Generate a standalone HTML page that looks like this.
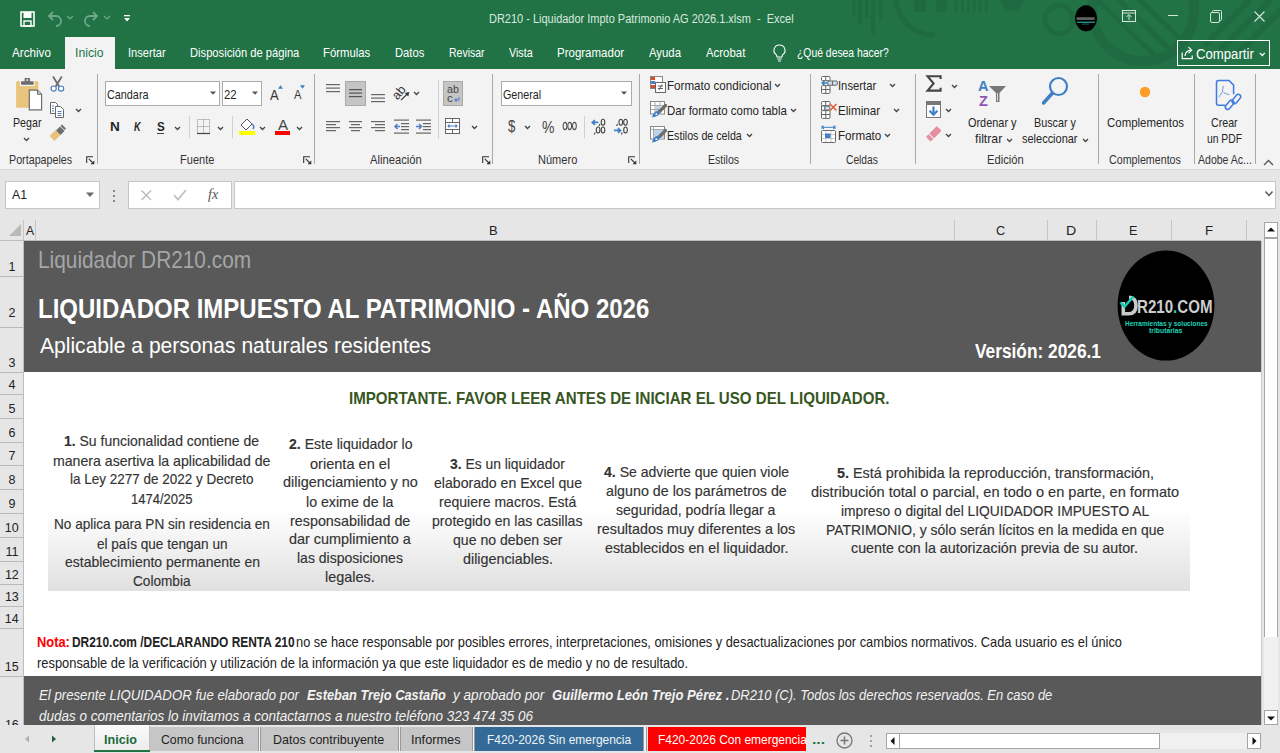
<!DOCTYPE html>
<html><head><meta charset="utf-8">
<style>
*{box-sizing:border-box;margin:0;padding:0}
html,body{width:1280px;height:753px;overflow:hidden;background:#fff;font-family:"Liberation Sans",sans-serif;position:relative}
.a{position:absolute}
.t{position:absolute;white-space:pre;transform-origin:0 0}
svg{overflow:visible}
</style></head><body>
<div class="a" style="left:0px;top:0px;width:1280px;height:69px;background:#217346"></div>
<svg class="a" style="left:830px;top:0px;" width="450" height="69" viewBox="0 0 450 69"><defs><clipPath id="cp1"><circle cx="313" cy="10" r="46"/></clipPath><clipPath id="cpt"><rect x="0" y="0" width="450" height="69"/></clipPath></defs>
<g fill="#1f6a40" clip-path="url(#cpt)">
<rect x="22" y="0" width="3.5" height="17"/><rect x="28" y="0" width="4" height="25"/><rect x="35" y="0" width="3.5" height="18"/><rect x="41" y="0" width="4" height="35"/><rect x="49" y="0" width="3.5" height="21"/>
<rect x="84" y="0" width="12" height="12"/><rect x="106" y="0" width="11" height="12"/>
<rect x="125" y="0" width="2.5" height="13"/><rect x="131" y="0" width="2.5" height="13"/><rect x="137" y="0" width="2.5" height="13"/><rect x="143" y="0" width="2.5" height="13"/><rect x="149" y="0" width="2.5" height="13"/><rect x="155" y="0" width="2.5" height="13"/>
<circle cx="182" cy="0" r="11"/>
</g>
<g fill="none" stroke="#1f6a40" clip-path="url(#cpt)">
<path d="M66 0 A38 38 0 0 0 105 35" stroke-width="5"/>
<circle cx="229" cy="19.5" r="14" stroke-width="5"/>
<circle cx="313" cy="10" r="51" stroke-width="10"/>
<g clip-path="url(#cp1)" stroke-width="5"><line x1="262" y1="-5" x2="335" y2="65"/><line x1="276" y1="-12" x2="349" y2="58"/><line x1="290" y1="-19" x2="363" y2="51"/></g>
<g stroke-width="6"><line x1="420" y1="0" x2="375" y2="45"/><line x1="440" y1="0" x2="390" y2="50"/><line x1="458" y1="3" x2="405" y2="56"/></g>
</g></svg>
<svg class="a" style="left:20px;top:11px;" width="15" height="16" viewBox="0 0 15 16"><rect x="1" y="1" width="13" height="14" fill="none" stroke="#fff" stroke-width="1.6"/><rect x="3.5" y="1" width="8" height="6" fill="#fff"/><rect x="4" y="10" width="7" height="5" fill="none" stroke="#fff" stroke-width="1.4"/></svg>
<svg class="a" style="left:47px;top:10px;" width="16" height="17" viewBox="0 0 16 17"><path d="M3 6 H9 A5 5 0 0 1 9 16" fill="none" stroke="#6ea98a" stroke-width="1.8"/><path d="M6 2 L2 6 L6 10" fill="none" stroke="#6ea98a" stroke-width="1.8"/></svg>
<svg class="a" style="left:66px;top:15px;" width="8" height="6" viewBox="0 0 8 6"><path d="M1 1 L4 4 L7 1" fill="none" stroke="#6ea98a" stroke-width="1.2"/></svg>
<svg class="a" style="left:83px;top:10px;" width="16" height="17" viewBox="0 0 16 17"><path d="M13 6 H7 A5 5 0 0 0 7 16" fill="none" stroke="#6ea98a" stroke-width="1.8"/><path d="M10 2 L14 6 L10 10" fill="none" stroke="#6ea98a" stroke-width="1.8"/></svg>
<svg class="a" style="left:103px;top:15px;" width="8" height="6" viewBox="0 0 8 6"><path d="M1 1 L4 4 L7 1" fill="none" stroke="#6ea98a" stroke-width="1.2"/></svg>
<svg class="a" style="left:123px;top:14px;" width="8" height="8" viewBox="0 0 8 8"><rect x="1" y="1" width="6" height="1.3" fill="#fff"/><path d="M1 4 L7 4 L4 7.5Z" fill="#fff"/></svg>
<div class="t" style="left:488.62px;top:13.12px;font-size:12.5px;line-height:12.5px;color:#dae9df;transform:scaleX(0.8786);">DR210 - Liquidador Impto Patrimonio AG 2026.1.xlsm  -  Excel</div>
<svg class="a" style="left:1074px;top:5px;" width="24" height="27" viewBox="0 0 24 27"><ellipse cx="12" cy="13.3" rx="10.9" ry="13.1" fill="#000"/><rect x="2.5" y="12.2" width="18" height="2.8" fill="#bdbdbd" opacity="0.5"/><rect x="3" y="16.6" width="18" height="1.3" fill="#2bb7a5" opacity="0.85"/><rect x="8" y="18.6" width="7" height="0.9" fill="#2bb7a5" opacity="0.6"/></svg>
<svg class="a" style="left:1122px;top:10px;" width="15" height="13" viewBox="0 0 15 13"><rect x="0.5" y="0.5" width="13" height="11" fill="none" stroke="#d5e6db" stroke-width="1"/><line x1="0.5" y1="3" x2="13.5" y2="3" stroke="#d5e6db"/><path d="M7 10 V5 M4.5 7 L7 4.5 L9.5 7" fill="none" stroke="#d5e6db"/></svg>
<div class="a" style="left:1168px;top:15px;width:10px;height:1px;background:#d5e6db"></div>
<svg class="a" style="left:1210px;top:10px;" width="12" height="13" viewBox="0 0 12 13"><rect x="0.5" y="2.5" width="9" height="10" fill="none" stroke="#d5e6db" rx="1.5"/><path d="M2.5 2.5 V1.5 Q2.5 0.5 3.5 0.5 H10.5 Q11.5 0.5 11.5 1.5 V9.5 Q11.5 10.5 10.5 10.5 H9.5" fill="none" stroke="#d5e6db"/></svg>
<svg class="a" style="left:1254px;top:11px;" width="11" height="11" viewBox="0 0 11 11"><path d="M0.5 0.5 L10.5 10.5 M10.5 0.5 L0.5 10.5" stroke="#d5e6db" stroke-width="1.1"/></svg>
<div class="a" style="left:65px;top:37px;width:50px;height:32px;background:#f3f3f3"></div>
<div class="t" style="left:12.00px;top:46.45px;font-size:13px;line-height:13px;color:#ffffff;transform:scaleX(0.8974);">Archivo</div>
<div class="t" style="left:127.50px;top:46.45px;font-size:13px;line-height:13px;color:#ffffff;transform:scaleX(0.8534);">Insertar</div>
<div class="t" style="left:189.61px;top:46.45px;font-size:13px;line-height:13px;color:#ffffff;transform:scaleX(0.8595);">Disposición de página</div>
<div class="t" style="left:323.49px;top:46.45px;font-size:13px;line-height:13px;color:#ffffff;transform:scaleX(0.8715);">Fórmulas</div>
<div class="t" style="left:395.00px;top:46.45px;font-size:13px;line-height:13px;color:#ffffff;transform:scaleX(0.8646);">Datos</div>
<div class="t" style="left:448.56px;top:46.45px;font-size:13px;line-height:13px;color:#ffffff;transform:scaleX(0.8065);">Revisar</div>
<div class="t" style="left:509.00px;top:46.45px;font-size:13px;line-height:13px;color:#ffffff;transform:scaleX(0.8249);">Vista</div>
<div class="t" style="left:557.08px;top:46.45px;font-size:13px;line-height:13px;color:#ffffff;transform:scaleX(0.8845);">Programador</div>
<div class="t" style="left:648.75px;top:46.45px;font-size:13px;line-height:13px;color:#ffffff;transform:scaleX(0.8729);">Ayuda</div>
<div class="t" style="left:706.25px;top:46.45px;font-size:13px;line-height:13px;color:#ffffff;transform:scaleX(0.8777);">Acrobat</div>
<div class="t" style="left:797.38px;top:46.45px;font-size:13px;line-height:13px;color:#ffffff;transform:scaleX(0.7987);">¿Qué desea hacer?</div>
<div class="t" style="left:74.90px;top:46.45px;font-size:13px;line-height:13px;color:#217346;transform:scaleX(0.9398);">Inicio</div>
<svg class="a" style="left:773px;top:44px;" width="13" height="18" viewBox="0 0 13 18"><path d="M6.5 1 A5.3 5.3 0 0 0 3.2 10.6 Q4 11.5 4 13 H9 Q9 11.5 9.8 10.6 A5.3 5.3 0 0 0 6.5 1Z" fill="none" stroke="#fff" stroke-width="1.1"/><path d="M4.3 15 H8.7 M5 17 H8" stroke="#fff" stroke-width="1.1"/></svg>
<div class="a" style="left:1177px;top:40px;width:93px;height:26px;border:1.5px solid #fff"></div>
<svg class="a" style="left:1181px;top:46px;" width="13" height="14" viewBox="0 0 13 14"><path d="M1.2 6.5 V12.6 H11.2 V9.5" fill="none" stroke="#fff" stroke-width="1.2"/><path d="M4 10 Q4.5 5 9.5 4.2" fill="none" stroke="#fff" stroke-width="1.2"/><path d="M7.6 1.2 L10.6 4.2 L7.6 7.2" fill="none" stroke="#fff" stroke-width="1.2"/></svg>
<div class="t" style="left:1196.14px;top:46.60px;font-size:14px;line-height:14px;color:#ffffff;transform:scaleX(0.9403);">Compartir</div>
<svg class="a" style="left:1259px;top:52px;" width="7" height="5" viewBox="0 0 7 5"><path d="M0.8 0.8 L3.3 3.5 L5.8 0.8" fill="none" stroke="#fff" stroke-width="1.2"/></svg>
<div class="a" style="left:0px;top:69px;width:1280px;height:100px;background:#f3f3f3"></div>
<div class="a" style="left:0px;top:169px;width:1280px;height:1px;background:#d4d4d4"></div>
<div class="a" style="left:97px;top:74px;width:1px;height:90px;background:#a9a9a9"></div>
<div class="a" style="left:314px;top:74px;width:1px;height:90px;background:#a9a9a9"></div>
<div class="a" style="left:492px;top:74px;width:1px;height:90px;background:#a9a9a9"></div>
<div class="a" style="left:639px;top:74px;width:1px;height:90px;background:#a9a9a9"></div>
<div class="a" style="left:810px;top:74px;width:1px;height:90px;background:#a9a9a9"></div>
<div class="a" style="left:915px;top:74px;width:1px;height:90px;background:#a9a9a9"></div>
<div class="a" style="left:1098px;top:74px;width:1px;height:90px;background:#a9a9a9"></div>
<div class="a" style="left:1194px;top:74px;width:1px;height:90px;background:#a9a9a9"></div>
<div class="a" style="left:1255px;top:74px;width:1px;height:90px;background:#a9a9a9"></div>
<div class="t" style="left:9.14px;top:153.82px;font-size:12.8px;line-height:12.8px;color:#333333;transform:scaleX(0.8380);">Portapapeles</div>
<div class="t" style="left:180.12px;top:153.82px;font-size:12.8px;line-height:12.8px;color:#333333;transform:scaleX(0.8622);">Fuente</div>
<div class="t" style="left:370.00px;top:153.82px;font-size:12.8px;line-height:12.8px;color:#333333;transform:scaleX(0.8757);">Alineación</div>
<div class="t" style="left:538.12px;top:153.82px;font-size:12.8px;line-height:12.8px;color:#333333;transform:scaleX(0.8630);">Número</div>
<div class="t" style="left:708.15px;top:153.82px;font-size:12.8px;line-height:12.8px;color:#333333;transform:scaleX(0.8253);">Estilos</div>
<div class="t" style="left:846.49px;top:153.82px;font-size:12.8px;line-height:12.8px;color:#333333;transform:scaleX(0.7993);">Celdas</div>
<div class="t" style="left:987.11px;top:153.82px;font-size:12.8px;line-height:12.8px;color:#333333;transform:scaleX(0.8736);">Edición</div>
<div class="t" style="left:1109.47px;top:153.82px;font-size:12.8px;line-height:12.8px;color:#333333;transform:scaleX(0.8354);">Complementos</div>
<div class="t" style="left:1198.00px;top:153.82px;font-size:12.8px;line-height:12.8px;color:#333333;transform:scaleX(0.8232);">Adobe Ac...</div>
<svg class="a" style="left:86px;top:156px;" width="9" height="9" viewBox="0 0 9 9"><path d="M0.7 7 V0.7 H7" fill="none" stroke="#333" stroke-width="1.1"/><path d="M2.8 2.8 L7.5 7.5" stroke="#333" stroke-width="1.1"/><path d="M8.3 4.5 V8.3 H4.5Z" fill="#333"/></svg>
<svg class="a" style="left:303px;top:156px;" width="9" height="9" viewBox="0 0 9 9"><path d="M0.7 7 V0.7 H7" fill="none" stroke="#333" stroke-width="1.1"/><path d="M2.8 2.8 L7.5 7.5" stroke="#333" stroke-width="1.1"/><path d="M8.3 4.5 V8.3 H4.5Z" fill="#333"/></svg>
<svg class="a" style="left:482px;top:156px;" width="9" height="9" viewBox="0 0 9 9"><path d="M0.7 7 V0.7 H7" fill="none" stroke="#333" stroke-width="1.1"/><path d="M2.8 2.8 L7.5 7.5" stroke="#333" stroke-width="1.1"/><path d="M8.3 4.5 V8.3 H4.5Z" fill="#333"/></svg>
<svg class="a" style="left:628px;top:156px;" width="9" height="9" viewBox="0 0 9 9"><path d="M0.7 7 V0.7 H7" fill="none" stroke="#333" stroke-width="1.1"/><path d="M2.8 2.8 L7.5 7.5" stroke="#333" stroke-width="1.1"/><path d="M8.3 4.5 V8.3 H4.5Z" fill="#333"/></svg>
<svg class="a" style="left:15px;top:77px;" width="30" height="34" viewBox="0 0 30 34"><rect x="1.1" y="4" width="22.3" height="26.8" rx="1.6" fill="#e9c47c"/><rect x="4.8" y="3" width="15" height="6" fill="#f3f3f3"/><rect x="6" y="4.3" width="12.7" height="3.5" rx="0.8" fill="#6d6d6d"/><rect x="9.6" y="1" width="5.4" height="4" rx="0.8" fill="#6d6d6d"/><rect x="11.4" y="2.3" width="1.8" height="1.5" fill="#f3f3f3"/><path d="M14.3 13.2 H22.5 L26.6 17.3 V32.8 H14.3Z" fill="#fff" stroke="#6d6d6d" stroke-width="1.2"/><path d="M22.5 13.2 V17.3 H26.6" fill="#c8c8c8" stroke="#6d6d6d" stroke-width="1"/></svg>
<div class="t" style="left:12.65px;top:115.73px;font-size:13.5px;line-height:13.5px;color:#262626;transform:scaleX(0.7895);">Pegar</div>
<svg class="a" style="left:23px;top:137px;" width="7" height="5" viewBox="0 0 7 5"><path d="M1 1 L3.5 3.5 L6 1" fill="none" stroke="#444" stroke-width="1.3"/></svg>
<svg class="a" style="left:50px;top:76px;" width="15" height="17" viewBox="0 0 15 17"><path d="M3 0.5 L9.3 10.8 M11.8 0.5 L5.5 10.8" stroke="#6d6d6d" stroke-width="1.8"/><circle cx="3.6" cy="12.6" r="2.6" fill="#fff" stroke="#4f7ec6" stroke-width="1.2"/><circle cx="11.1" cy="12.6" r="2.6" fill="#fff" stroke="#4f7ec6" stroke-width="1.2"/></svg>
<svg class="a" style="left:49px;top:101px;" width="16" height="17" viewBox="0 0 16 17"><path d="M1.5 1.5 H6.5 L8.5 3.5 V12.5 H1.5Z" fill="#fff" stroke="#666"/><path d="M6.5 5.5 H11.5 L14.5 8.5 V16.5 H6.5Z" fill="#fff" stroke="#666"/><path d="M3 5 H5 M3 7.5 H5 M3 10 H5" stroke="#4f7ec6"/><path d="M8.5 10.5 H12.5 M8.5 12.5 H12.5 M8.5 14.5 H12.5" stroke="#4f7ec6"/></svg>
<svg class="a" style="left:75px;top:108px;" width="7" height="5" viewBox="0 0 7 5"><path d="M1 1 L3.5 3.5 L6 1" fill="none" stroke="#444" stroke-width="1.3"/></svg>
<svg class="a" style="left:49px;top:125px;" width="17" height="17" viewBox="0 0 17 17"><path d="M0.5 11 L6.5 5 L11.5 10 L5.5 16Z" fill="#e8c27a"/><path d="M7 5.5 L11 1.5 L15.5 6 L11.5 10Z" fill="#6d6d6d"/><path d="M11.5 1 L13 -0.5 L17 3.5 L15.5 5Z" fill="#6d6d6d"/></svg>
<div class="a" style="left:105px;top:81px;width:115px;height:25px;background:#fff;border:1px solid #ababab"></div>
<div class="t" style="left:107.46px;top:87.73px;font-size:13.5px;line-height:13.5px;color:#262626;transform:scaleX(0.8013);">Candara</div>
<svg class="a" style="left:210px;top:91px;" width="7" height="5" viewBox="0 0 7 5"><path d="M0 0.5 H6 L3 3.8Z" fill="#555"/></svg>
<div class="a" style="left:222px;top:81px;width:40px;height:25px;background:#fff;border:1px solid #ababab"></div>
<div class="t" style="left:224.43px;top:87.73px;font-size:13.5px;line-height:13.5px;color:#262626;transform:scaleX(0.8424);">22</div>
<svg class="a" style="left:252px;top:91px;" width="7" height="5" viewBox="0 0 7 5"><path d="M0 0.5 H6 L3 3.8Z" fill="#555"/></svg>
<div class="t" style="left:270.40px;top:86.70px;font-size:15.3px;line-height:15.3px;color:#333;transform:scaleX(0.8517);">A</div>
<svg class="a" style="left:277.5px;top:85px;" width="6" height="4" viewBox="0 0 6 4"><path d="M0 3.8 L2.5 0.3 L5 3.8Z" fill="#3f7fc3"/></svg>
<div class="t" style="left:293.50px;top:89.08px;font-size:12.5px;line-height:12.5px;color:#333;transform:scaleX(0.8848);">A</div>
<svg class="a" style="left:300px;top:85px;" width="6" height="4" viewBox="0 0 6 4"><path d="M0 0.3 L2.5 3.8 L5 0.3Z" fill="#3f7fc3"/></svg>
<div class="t" style="left:110.05px;top:120.80px;font-size:12px;line-height:12px;color:#262626;transform:scaleX(1.1299);"><span style="font-weight:bold;">N</span></div>
<div class="t" style="left:133.82px;top:120.80px;font-size:12px;line-height:12px;color:#262626;transform:scaleX(0.7675);"><span style="font-weight:bold;font-style:italic;">K</span></div>
<div class="t" style="left:156.65px;top:120.80px;font-size:12px;line-height:12px;color:#262626;transform:scaleX(0.9722);"><span style="font-weight:bold;">S</span></div>
<div class="a" style="left:157px;top:133px;width:7px;height:1px;background:#444"></div>
<svg class="a" style="left:174px;top:126px;" width="7" height="5" viewBox="0 0 7 5"><path d="M1 1 L3.5 3.5 L6 1" fill="none" stroke="#444" stroke-width="1.3"/></svg>
<div class="a" style="left:189px;top:116px;width:1px;height:22px;background:#d0d0d0"></div>
<svg class="a" style="left:197px;top:119px;" width="13" height="15" viewBox="0 0 13 15"><path d="M0.5 0.5 H12.5 V14.5 H0.5Z M6.5 0.5 V14.5 M0.5 7.5 H12.5" fill="none" stroke="#888" stroke-dasharray="1 1"/><path d="M0 14.5 H13" stroke="#444" stroke-width="1.2"/></svg>
<svg class="a" style="left:217px;top:126px;" width="7" height="5" viewBox="0 0 7 5"><path d="M1 1 L3.5 3.5 L6 1" fill="none" stroke="#444" stroke-width="1.3"/></svg>
<div class="a" style="left:232px;top:116px;width:1px;height:22px;background:#d0d0d0"></div>
<svg class="a" style="left:239px;top:117px;" width="17" height="19" viewBox="0 0 17 19"><path d="M2 8 L8 2 L13 7 L7 13Z" fill="#fff" stroke="#555"/><path d="M13 7 Q16 9 14 12" fill="none" stroke="#4f7ec6" stroke-width="1.5"/><rect x="0" y="14" width="16" height="4" fill="#ffff00"/></svg>
<svg class="a" style="left:259px;top:126px;" width="7" height="5" viewBox="0 0 7 5"><path d="M1 1 L3.5 3.5 L6 1" fill="none" stroke="#444" stroke-width="1.3"/></svg>
<div class="t" style="left:278.00px;top:117.67px;font-size:14.5px;line-height:14.5px;color:#444;transform:scaleX(1.0449);">A</div>
<div class="a" style="left:275px;top:131px;width:15px;height:4px;background:#ff0000"></div>
<svg class="a" style="left:296px;top:126px;" width="7" height="5" viewBox="0 0 7 5"><path d="M1 1 L3.5 3.5 L6 1" fill="none" stroke="#444" stroke-width="1.3"/></svg>
<svg class="a" style="left:326px;top:84px;" width="20" height="14" viewBox="0 0 20 14"><rect x="0" y="0.0" width="14" height="1.2" fill="#666"/><rect x="0" y="3.5" width="14" height="1.2" fill="#666"/><rect x="0" y="7.0" width="14" height="1.2" fill="#666"/></svg>
<div class="a" style="left:345px;top:81px;width:21px;height:25px;background:#c5c5c5;border:1px solid #a9a9a9"></div>
<svg class="a" style="left:349px;top:89px;" width="20" height="14" viewBox="0 0 20 14"><rect x="0" y="0.0" width="13" height="1.2" fill="#555"/><rect x="0" y="3.5" width="13" height="1.2" fill="#555"/><rect x="0" y="7.0" width="13" height="1.2" fill="#555"/></svg>
<svg class="a" style="left:371px;top:94px;" width="20" height="14" viewBox="0 0 20 14"><rect x="0" y="0.0" width="14" height="1.2" fill="#666"/><rect x="0" y="3.5" width="14" height="1.2" fill="#666"/><rect x="0" y="7.0" width="14" height="1.2" fill="#666"/></svg>
<svg class="a" style="left:391px;top:83px;" width="20" height="20" viewBox="0 0 20 20"><text x="1" y="14.5" font-size="12.5" font-family="Liberation Sans" fill="#333" transform="rotate(-50 7 10)">ab</text><path d="M10 17.2 L17.2 10" stroke="#333" stroke-width="1.2"/><path d="M18.3 8.9 L13.8 9.9 L17.3 13.4Z" fill="#333"/></svg>
<svg class="a" style="left:412.5px;top:91px;" width="7" height="5" viewBox="0 0 7 5"><path d="M1 1 L3.5 3.5 L6 1" fill="none" stroke="#444" stroke-width="1.3"/></svg>
<div class="a" style="left:438px;top:80px;width:1px;height:59px;background:#d0d0d0"></div>
<div class="a" style="left:443px;top:81px;width:20px;height:25px;background:#c5c5c5;border:1px solid #a9a9a9"></div>
<div class="t" style="left:446.58px;top:84.50px;font-size:10px;line-height:10px;color:#444;transform:scaleX(1.0577);">ab</div>
<div class="t" style="left:446.53px;top:93.50px;font-size:10px;line-height:10px;color:#444;transform:scaleX(1.1628);">c</div>
<svg class="a" style="left:454px;top:97px;" width="6" height="5" viewBox="0 0 6 5"><path d="M5 0 V3 H1 M2.5 1.5 L1 3 L2.5 4.5" fill="none" stroke="#4f7ec6" stroke-width="1.1"/></svg>
<svg class="a" style="left:326px;top:121px;" width="20" height="14" viewBox="0 0 20 14"><rect x="0" y="0.0" width="14" height="1.2" fill="#666"/><rect x="0" y="3.0" width="10" height="1.2" fill="#666"/><rect x="0" y="6.0" width="14" height="1.2" fill="#666"/><rect x="0" y="9.0" width="10" height="1.2" fill="#666"/></svg>
<svg class="a" style="left:349px;top:121px;" width="20" height="14" viewBox="0 0 20 14"><rect x="0" y="0.0" width="13" height="1.2" fill="#666"/><rect x="2" y="3.0" width="9" height="1.2" fill="#666"/><rect x="0" y="6.0" width="13" height="1.2" fill="#666"/><rect x="2" y="9.0" width="9" height="1.2" fill="#666"/></svg>
<svg class="a" style="left:371px;top:121px;" width="20" height="14" viewBox="0 0 20 14"><rect x="0" y="0.0" width="14" height="1.2" fill="#666"/><rect x="4" y="3.0" width="10" height="1.2" fill="#666"/><rect x="0" y="6.0" width="14" height="1.2" fill="#666"/><rect x="4" y="9.0" width="10" height="1.2" fill="#666"/></svg>
<svg class="a" style="left:394px;top:119px;" width="16" height="15" viewBox="0 0 16 15"><rect x="0" y="0.5" width="15" height="1.2" fill="#666"/><rect x="7" y="4" width="8" height="1.2" fill="#666"/><rect x="7" y="7" width="8" height="1.2" fill="#666"/><rect x="7" y="10" width="8" height="1.2" fill="#666"/><rect x="0" y="13.5" width="15" height="1.2" fill="#666"/><path d="M6 7.5 H1 M3.5 5 L1 7.5 L3.5 10" fill="none" stroke="#4f7ec6" stroke-width="1.5"/></svg>
<svg class="a" style="left:416px;top:119px;" width="16" height="15" viewBox="0 0 16 15"><rect x="0" y="0.5" width="15" height="1.2" fill="#666"/><rect x="7" y="4" width="8" height="1.2" fill="#666"/><rect x="7" y="7" width="8" height="1.2" fill="#666"/><rect x="7" y="10" width="8" height="1.2" fill="#666"/><rect x="0" y="13.5" width="15" height="1.2" fill="#666"/><path d="M0 7.5 H5.5 M3 5 L5.5 7.5 L3 10" fill="none" stroke="#4f7ec6" stroke-width="1.5"/></svg>
<svg class="a" style="left:445px;top:118px;" width="16" height="17" viewBox="0 0 16 17"><rect x="0.5" y="0.5" width="14" height="15" fill="#fff" stroke="#666"/><path d="M0.5 4.5 H14.5 M0.5 11.5 H14.5 M7.5 0.5 V4.5 M7.5 11.5 V15.5" stroke="#666"/><path d="M3 8 H12 M4.5 6.5 L3 8 L4.5 9.5 M10.5 6.5 L12 8 L10.5 9.5" fill="none" stroke="#4f7ec6" stroke-width="1.1"/></svg>
<svg class="a" style="left:471px;top:125px;" width="7" height="5" viewBox="0 0 7 5"><path d="M1 1 L3.5 3.5 L6 1" fill="none" stroke="#444" stroke-width="1.3"/></svg>
<div class="a" style="left:501px;top:81px;width:131px;height:25px;background:#fff;border:1px solid #ababab"></div>
<div class="t" style="left:503.46px;top:87.83px;font-size:13.5px;line-height:13.5px;color:#262626;transform:scaleX(0.7944);">General</div>
<svg class="a" style="left:621px;top:91px;" width="7" height="5" viewBox="0 0 7 5"><path d="M0 0.5 H6 L3 3.8Z" fill="#555"/></svg>
<div class="t" style="left:507.87px;top:118.28px;font-size:16.5px;line-height:16.5px;color:#444;transform:scaleX(0.8005);">$</div>
<svg class="a" style="left:524px;top:125px;" width="7" height="5" viewBox="0 0 7 5"><path d="M1 1 L3.5 3.5 L6 1" fill="none" stroke="#444" stroke-width="1.3"/></svg>
<div class="t" style="left:542.08px;top:118.97px;font-size:16.5px;line-height:16.5px;color:#444;transform:scaleX(0.8500);">%</div>
<svg class="a" style="left:562px;top:121px;" width="16" height="10" viewBox="0 0 16 10"><ellipse cx="3" cy="5" rx="1.9" ry="3.6" fill="none" stroke="#555" stroke-width="1.1"/><ellipse cx="7.7" cy="5" rx="1.9" ry="3.6" fill="none" stroke="#555" stroke-width="1.1"/><ellipse cx="12.4" cy="5" rx="1.9" ry="3.6" fill="none" stroke="#555" stroke-width="1.1"/></svg>
<div class="a" style="left:584px;top:116px;width:1px;height:22px;background:#d0d0d0"></div>
<svg class="a" style="left:590px;top:118px;" width="16" height="18" viewBox="0 0 16 18"><ellipse cx="13" cy="4.2" rx="1.8" ry="3" fill="none" stroke="#444" stroke-width="1.1"/><ellipse cx="8.1" cy="12" rx="1.8" ry="3" fill="none" stroke="#444" stroke-width="1.1"/><ellipse cx="13" cy="12" rx="1.8" ry="3" fill="none" stroke="#444" stroke-width="1.1"/><path d="M10 6 L9 8 M5.2 14.4 L4.2 16.4" stroke="#444" stroke-width="1.1"/><path d="M8.3 4.4 H2.5 M4.9 2 L2.2 4.4 L4.9 6.8" fill="none" stroke="#3f7fc3" stroke-width="1.6"/></svg>
<svg class="a" style="left:612px;top:118px;" width="16" height="18" viewBox="0 0 16 18"><ellipse cx="8.8" cy="4.2" rx="1.8" ry="3" fill="none" stroke="#444" stroke-width="1.1"/><ellipse cx="13.5" cy="4.2" rx="1.8" ry="3" fill="none" stroke="#444" stroke-width="1.1"/><ellipse cx="13.5" cy="12" rx="1.8" ry="3" fill="none" stroke="#444" stroke-width="1.1"/><path d="M5.6 6 L4.6 8 M10.3 14.4 L9.3 16.4" stroke="#444" stroke-width="1.1"/><path d="M2 12.4 H8.3 M5.9 10 L8.6 12.4 L5.9 14.8" fill="none" stroke="#3f7fc3" stroke-width="1.6"/></svg>
<svg class="a" style="left:650px;top:76px;" width="16" height="17" viewBox="0 0 16 17"><rect x="0.5" y="0.5" width="12" height="12" fill="#fff" stroke="#888"/><rect x="1" y="1" width="4" height="3" fill="#e04a2a"/><rect x="1" y="5" width="4" height="3" fill="#4f7ec6"/><rect x="1" y="9" width="4" height="3" fill="#e04a2a"/><rect x="5.5" y="6.5" width="10" height="10" fill="#fff" stroke="#666"/><path d="M8 10 H13 M8 12.5 H13 M12 8.5 L9 14" stroke="#555" stroke-width="0.9"/></svg>
<div class="t" style="left:667.07px;top:78.73px;font-size:13.5px;line-height:13.5px;color:#262626;transform:scaleX(0.8611);">Formato condicional</div>
<svg class="a" style="left:774px;top:83px;" width="7" height="5" viewBox="0 0 7 5"><path d="M1 1 L3.5 3.5 L6 1" fill="none" stroke="#444" stroke-width="1.3"/></svg>
<svg class="a" style="left:650px;top:101px;" width="17" height="17" viewBox="0 0 17 17"><rect x="0.5" y="0.5" width="14" height="12.5" fill="#fff" stroke="#888"/><path d="M0.5 4.5 H14.5 M0.5 8.5 H14.5 M5 0.5 V13 M10 0.5 V13" stroke="#aaa"/><rect x="5.5" y="5" width="4" height="3" fill="#bcd3ee"/><rect x="5.5" y="9" width="4" height="3.5" fill="#bcd3ee"/><path d="M15.5 4.5 L9.5 10.5" stroke="#6d6d6d" stroke-width="3.2" stroke-linecap="round"/><path d="M2 16.5 Q2.5 12.5 5.5 10.5 Q7.5 9.5 9 11 Q10 12.8 8.3 14.3 Q5.5 16.3 2 16.5Z" fill="#3f7fc3"/><circle cx="6.3" cy="13.2" r="0.9" fill="#fff"/></svg>
<div class="t" style="left:667.08px;top:103.62px;font-size:13.5px;line-height:13.5px;color:#262626;transform:scaleX(0.8500);">Dar formato como tabla</div>
<svg class="a" style="left:790px;top:108px;" width="7" height="5" viewBox="0 0 7 5"><path d="M1 1 L3.5 3.5 L6 1" fill="none" stroke="#444" stroke-width="1.3"/></svg>
<svg class="a" style="left:650px;top:126px;" width="17" height="17" viewBox="0 0 17 17"><rect x="0.5" y="0.5" width="14" height="12.5" fill="#fff" stroke="#888"/><path d="M0.5 3.5 H14.5 M3.5 0.5 V13" stroke="#aaa"/><rect x="4" y="4" width="10" height="8.5" fill="#bcd3ee"/><path d="M15.5 4.5 L9.5 10.5" stroke="#6d6d6d" stroke-width="3.2" stroke-linecap="round"/><path d="M2 16.5 Q2.5 12.5 5.5 10.5 Q7.5 9.5 9 11 Q10 12.8 8.3 14.3 Q5.5 16.3 2 16.5Z" fill="#3f7fc3"/><circle cx="6.3" cy="13.2" r="0.9" fill="#fff"/></svg>
<div class="t" style="left:667.15px;top:128.62px;font-size:13.5px;line-height:13.5px;color:#262626;transform:scaleX(0.7910);">Estilos de celda</div>
<svg class="a" style="left:746px;top:133px;" width="7" height="5" viewBox="0 0 7 5"><path d="M1 1 L3.5 3.5 L6 1" fill="none" stroke="#444" stroke-width="1.3"/></svg>
<svg class="a" style="left:821px;top:76px;" width="17" height="18" viewBox="0 0 17 18"><rect x="0.5" y="0.5" width="8.5" height="4.2" rx="1" fill="#fff" stroke="#666" stroke-width="1"/><path d="M4.75 0.5 V4.7" stroke="#666" stroke-width="1"/><rect x="6.8" y="5" width="9.5" height="4.2" rx="1" fill="#cfe0f5" stroke="#666" stroke-width="1"/><path d="M11.55 5 V9.2" stroke="#666" stroke-width="1"/><rect x="0.5" y="9.6" width="8.5" height="7.8" rx="1" fill="#fff" stroke="#666" stroke-width="1"/><path d="M4.75 9.6 V17.4 M0.5 13.5 H9" stroke="#666" stroke-width="1"/><path d="M6 7.1 H1.3 M3.4 4.9 L1.2 7.1 L3.4 9.3" fill="none" stroke="#3f7fc3" stroke-width="1.5"/></svg>
<div class="t" style="left:837.99px;top:78.73px;font-size:13.5px;line-height:13.5px;color:#262626;transform:scaleX(0.8331);">Insertar</div>
<svg class="a" style="left:889px;top:83px;" width="7" height="5" viewBox="0 0 7 5"><path d="M1 1 L3.5 3.5 L6 1" fill="none" stroke="#444" stroke-width="1.3"/></svg>
<svg class="a" style="left:821px;top:101px;" width="17" height="18" viewBox="0 0 17 18"><rect x="0.5" y="0.5" width="8.5" height="4.2" rx="1" fill="#fff" stroke="#666" stroke-width="1"/><path d="M4.75 0.5 V4.7" stroke="#666" stroke-width="1"/><rect x="0.5" y="5" width="3.5" height="4.2" fill="#fff" stroke="#666" stroke-width="1"/><rect x="3.8" y="5.2" width="5" height="3.8" rx="0.8" fill="#cfe0f5" stroke="#666" stroke-width="1"/><rect x="0.5" y="9.6" width="8.5" height="7.8" rx="1" fill="#fff" stroke="#666" stroke-width="1"/><path d="M4.75 9.6 V17.4 M0.5 13.5 H9" stroke="#666" stroke-width="1"/><path d="M9 3 L15.5 9.5 M15.5 3 L9 9.5" stroke="#e0603c" stroke-width="1.6"/></svg>
<div class="t" style="left:838.07px;top:103.62px;font-size:13.5px;line-height:13.5px;color:#262626;transform:scaleX(0.8628);">Eliminar</div>
<svg class="a" style="left:893px;top:108px;" width="7" height="5" viewBox="0 0 7 5"><path d="M1 1 L3.5 3.5 L6 1" fill="none" stroke="#444" stroke-width="1.3"/></svg>
<svg class="a" style="left:821px;top:125px;" width="16" height="19" viewBox="0 0 16 19"><path d="M1 2.3 H14 M1 0.5 V4 M14 0.5 V4 M3 0.8 L1 2.3 L3 3.8 M12 0.8 L14 2.3 L12 3.8" fill="none" stroke="#3f7fc3" stroke-width="1"/><rect x="0.5" y="5.5" width="14" height="12" rx="1" fill="#fff" stroke="#666" stroke-width="1"/><path d="M0.5 9.5 H14.5 M0.5 13.5 H14.5 M5 5.5 V17.5 M10 5.5 V17.5" stroke="#999" stroke-dasharray="1 1"/><rect x="4" y="8.5" width="5.5" height="4.5" fill="#3f7fc3"/></svg>
<div class="t" style="left:838.07px;top:128.62px;font-size:13.5px;line-height:13.5px;color:#262626;transform:scaleX(0.8618);">Formato</div>
<svg class="a" style="left:884px;top:133px;" width="7" height="5" viewBox="0 0 7 5"><path d="M1 1 L3.5 3.5 L6 1" fill="none" stroke="#444" stroke-width="1.3"/></svg>
<svg class="a" style="left:926px;top:75px;" width="16" height="17" viewBox="0 0 16 17"><path d="M14.6 4 V1.3 H1.6 L7.6 8.5 L1.6 15.6 H14.6 V12.8" fill="none" stroke="#444" stroke-width="2.1"/></svg>
<svg class="a" style="left:951px;top:84px;" width="7" height="5" viewBox="0 0 7 5"><path d="M1 1 L3.5 3.5 L6 1" fill="none" stroke="#444" stroke-width="1.3"/></svg>
<svg class="a" style="left:926px;top:101px;" width="16" height="18" viewBox="0 0 16 18"><rect x="0.5" y="0.5" width="14" height="16" fill="#fff" stroke="#777"/><rect x="0.5" y="0.5" width="14" height="3.5" fill="#777"/><path d="M7.5 5.5 V13.5" stroke="#3f7fc3" stroke-width="2.2"/><path d="M3.6 9.8 L7.5 13.7 L11.4 9.8" fill="none" stroke="#3f7fc3" stroke-width="2.2"/></svg>
<svg class="a" style="left:945px;top:108px;" width="7" height="5" viewBox="0 0 7 5"><path d="M1 1 L3.5 3.5 L6 1" fill="none" stroke="#444" stroke-width="1.3"/></svg>
<svg class="a" style="left:926px;top:126px;" width="15" height="15" viewBox="0 0 15 15"><g transform="rotate(-45 7.5 8)"><rect x="0" y="4.6" width="15.5" height="6.8" rx="1" fill="#e58ea1"/><rect x="3.8" y="4.3" width="1" height="7.4" fill="#f3f3f3"/></g></svg>
<svg class="a" style="left:945px;top:133px;" width="7" height="5" viewBox="0 0 7 5"><path d="M1 1 L3.5 3.5 L6 1" fill="none" stroke="#444" stroke-width="1.3"/></svg>
<svg class="a" style="left:978px;top:78px;" width="30" height="30" viewBox="0 0 30 30"><text x="0" y="13" font-size="14.5" font-weight="bold" font-family="Liberation Sans" fill="#3f7fc3">A</text><text x="1" y="28" font-size="14.5" font-weight="bold" font-family="Liberation Sans" fill="#8e55b5">Z</text><path d="M11 8 H28 L21.5 15 V24 L18 24 V15Z" fill="#777"/><path d="M19.5 15 V23" stroke="#f3f3f3" stroke-width="0.8"/></svg>
<svg class="a" style="left:1041px;top:77px;" width="28" height="31" viewBox="0 0 28 31"><circle cx="17.5" cy="9.5" r="8.5" fill="none" stroke="#3f7fc3" stroke-width="2.2"/><path d="M11.5 16 L2.5 26" stroke="#3f7fc3" stroke-width="3.5" stroke-linecap="round"/></svg>
<div class="t" style="left:968.45px;top:115.83px;font-size:13.5px;line-height:13.5px;color:#262626;transform:scaleX(0.8081);">Ordenar y</div>
<div class="t" style="left:974.88px;top:132.33px;font-size:13.5px;line-height:13.5px;color:#262626;transform:scaleX(0.9091);">filtrar</div>
<svg class="a" style="left:1006px;top:138px;" width="7" height="5" viewBox="0 0 7 5"><path d="M1 1 L3.5 3.5 L6 1" fill="none" stroke="#444" stroke-width="1.3"/></svg>
<div class="t" style="left:1034.14px;top:115.83px;font-size:13.5px;line-height:13.5px;color:#262626;transform:scaleX(0.7971);">Buscar y</div>
<div class="t" style="left:1021.67px;top:132.33px;font-size:13.5px;line-height:13.5px;color:#262626;transform:scaleX(0.8132);">seleccionar</div>
<svg class="a" style="left:1082px;top:138px;" width="7" height="5" viewBox="0 0 7 5"><path d="M1 1 L3.5 3.5 L6 1" fill="none" stroke="#444" stroke-width="1.3"/></svg>
<svg class="a" style="left:1139px;top:86px;" width="12" height="12" viewBox="0 0 12 12"><circle cx="6" cy="6" r="5.2" fill="#ff8c00" opacity="0.85"/></svg>
<div class="t" style="left:1107.43px;top:115.83px;font-size:13.5px;line-height:13.5px;color:#262626;transform:scaleX(0.8478);">Complementos</div>
<svg class="a" style="left:1215px;top:79px;" width="30" height="32" viewBox="0 0 30 32"><path d="M10 26.2 H3.5 Q1.5 26.2 1.5 24.2 V3.5 Q1.5 1.5 3.5 1.5 H14 L18.6 6.1 V15.2" fill="none" stroke="#3f7ae0" stroke-width="1.5"/><path d="M8.3 6.8 Q8.6 13 4 18 M8.4 13.2 Q11 15.4 14.3 15.6" fill="none" stroke="#6f9ae8" stroke-width="1"/><g fill="none" stroke="#3f7ae0" stroke-width="1.5"><rect x="-2.4" y="-5.3" width="4.8" height="10.6" rx="2.4" transform="translate(14.6,25.8) rotate(40)"/><rect x="-2.4" y="-5.3" width="4.8" height="10.6" rx="2.4" transform="translate(21.4,20) rotate(40)"/></g></svg>
<div class="t" style="left:1211.47px;top:115.83px;font-size:13.5px;line-height:13.5px;color:#262626;transform:scaleX(0.7893);">Crear</div>
<div class="t" style="left:1207.38px;top:132.33px;font-size:13.5px;line-height:13.5px;color:#262626;transform:scaleX(0.7655);">un PDF</div>
<svg class="a" style="left:1263px;top:159px;" width="11" height="7" viewBox="0 0 11 7"><path d="M1 6 L5.5 1.5 L10 6" fill="none" stroke="#555" stroke-width="1.3"/></svg>
<div class="a" style="left:0px;top:170px;width:1280px;height:50px;background:#e6e6e6"></div>
<div class="a" style="left:5px;top:181px;width:95px;height:28px;background:#fff;border:1px solid #c6c6c6"></div>
<div class="t" style="left:11.50px;top:187.95px;font-size:13px;line-height:13px;color:#222;transform:scaleX(0.9452);">A1</div>
<svg class="a" style="left:86px;top:192px;" width="9" height="6" viewBox="0 0 9 6"><path d="M0 0.5 H8 L4 5Z" fill="#6a6a6a"/></svg>
<div class="a" style="left:113px;top:190px;width:2px;height:2px;background:#8a8a8a"></div>
<div class="a" style="left:113px;top:195px;width:2px;height:2px;background:#8a8a8a"></div>
<div class="a" style="left:113px;top:200px;width:2px;height:2px;background:#8a8a8a"></div>
<div class="a" style="left:128px;top:181px;width:104px;height:28px;background:#fff;border:1px solid #c6c6c6"></div>
<svg class="a" style="left:141px;top:190px;" width="11" height="11" viewBox="0 0 11 11"><path d="M0.5 0.5 L10 10 M10 0.5 L0.5 10" stroke="#b5b5b5" stroke-width="1.2"/></svg>
<svg class="a" style="left:173px;top:189px;" width="14" height="12" viewBox="0 0 14 12"><path d="M1 6 L5 10.5 L13 1" fill="none" stroke="#c2c2c2" stroke-width="1.8"/></svg>
<div class="t" style="left:207.58px;top:188.10px;font-size:14px;line-height:14px;color:#555;transform:scaleX(1.0073);font-family:'Liberation Serif'"><span style="font-style:italic;">f</span><span style="font-style:italic;">x</span></div>
<div class="a" style="left:234px;top:181px;width:1042px;height:28px;background:#fff;border:1px solid #c6c6c6"></div>
<svg class="a" style="left:1265px;top:191px;" width="8" height="6" viewBox="0 0 8 6"><path d="M0.5 0.5 L4 4.5 L7.5 0.5" fill="none" stroke="#555" stroke-width="1.4"/></svg>
<div class="a" style="left:0px;top:220px;width:1262px;height:21px;background:#e6e6e6"></div>
<div class="a" style="left:0px;top:240px;width:1262px;height:1px;background:#bdbdbd"></div>
<svg class="a" style="left:8px;top:223px;" width="14" height="14" viewBox="0 0 14 14"><path d="M13 1 V13 H1Z" fill="#b9b9b9"/></svg>
<div class="a" style="left:23px;top:220px;width:1px;height:20px;background:#c6c6c6"></div>
<div class="a" style="left:35px;top:220px;width:1px;height:20px;background:#c6c6c6"></div>
<div class="a" style="left:954px;top:220px;width:1px;height:20px;background:#c6c6c6"></div>
<div class="a" style="left:1047px;top:220px;width:1px;height:20px;background:#c6c6c6"></div>
<div class="a" style="left:1096px;top:220px;width:1px;height:20px;background:#c6c6c6"></div>
<div class="a" style="left:1171px;top:220px;width:1px;height:20px;background:#c6c6c6"></div>
<div class="a" style="left:1246px;top:220px;width:1px;height:20px;background:#c6c6c6"></div>
<div class="t" style="left:25.50px;top:224.68px;font-size:12.5px;line-height:12.5px;color:#222;transform:scaleX(0.9697);">A</div>
<div class="t" style="left:489.46px;top:224.68px;font-size:12.5px;line-height:12.5px;color:#222;transform:scaleX(1.0370);">B</div>
<div class="t" style="left:996.37px;top:224.68px;font-size:12.5px;line-height:12.5px;color:#222;transform:scaleX(1.0159);">C</div>
<div class="t" style="left:1066.37px;top:224.68px;font-size:12.5px;line-height:12.5px;color:#222;transform:scaleX(1.1333);">D</div>
<div class="t" style="left:1128.98px;top:224.68px;font-size:12.5px;line-height:12.5px;color:#222;transform:scaleX(1.0182);">E</div>
<div class="t" style="left:1204.94px;top:224.68px;font-size:12.5px;line-height:12.5px;color:#222;transform:scaleX(1.0612);">F</div>
<div class="a" style="left:0px;top:241px;width:24px;height:484px;background:#e6e6e6"></div>
<div class="a" style="left:23px;top:241px;width:1px;height:484px;background:#bdbdbd"></div>
<div class="a" style="left:0px;top:276px;width:23px;height:1px;background:#b9b9b9"></div>
<div class="t" style="left:8.38px;top:261.38px;font-size:12.5px;line-height:12.5px;color:#222;transform:scaleX(1.0000);">1</div>
<div class="a" style="left:0px;top:327px;width:23px;height:1px;background:#b9b9b9"></div>
<div class="t" style="left:8.50px;top:307.38px;font-size:12.5px;line-height:12.5px;color:#222;transform:scaleX(1.0000);">2</div>
<div class="a" style="left:0px;top:372px;width:23px;height:1px;background:#b9b9b9"></div>
<div class="t" style="left:8.56px;top:357.38px;font-size:12.5px;line-height:12.5px;color:#222;transform:scaleX(1.0000);">3</div>
<div class="a" style="left:0px;top:394px;width:23px;height:1px;background:#b9b9b9"></div>
<div class="t" style="left:8.56px;top:379.38px;font-size:12.5px;line-height:12.5px;color:#222;transform:scaleX(1.0000);">4</div>
<div class="a" style="left:0px;top:418px;width:23px;height:1px;background:#b9b9b9"></div>
<div class="t" style="left:8.50px;top:403.38px;font-size:12.5px;line-height:12.5px;color:#222;transform:scaleX(1.0000);">5</div>
<div class="a" style="left:0px;top:442px;width:23px;height:1px;background:#b9b9b9"></div>
<div class="t" style="left:8.50px;top:427.38px;font-size:12.5px;line-height:12.5px;color:#222;transform:scaleX(1.0000);">6</div>
<div class="a" style="left:0px;top:465px;width:23px;height:1px;background:#b9b9b9"></div>
<div class="t" style="left:8.50px;top:450.38px;font-size:12.5px;line-height:12.5px;color:#222;transform:scaleX(1.0000);">7</div>
<div class="a" style="left:0px;top:489px;width:23px;height:1px;background:#b9b9b9"></div>
<div class="t" style="left:8.56px;top:474.38px;font-size:12.5px;line-height:12.5px;color:#222;transform:scaleX(1.0000);">8</div>
<div class="a" style="left:0px;top:513px;width:23px;height:1px;background:#b9b9b9"></div>
<div class="t" style="left:8.50px;top:498.38px;font-size:12.5px;line-height:12.5px;color:#222;transform:scaleX(1.0000);">9</div>
<div class="a" style="left:0px;top:537px;width:23px;height:1px;background:#b9b9b9"></div>
<div class="t" style="left:4.81px;top:522.38px;font-size:12.5px;line-height:12.5px;color:#222;transform:scaleX(1.0000);">10</div>
<div class="a" style="left:0px;top:561px;width:23px;height:1px;background:#b9b9b9"></div>
<div class="t" style="left:5.38px;top:546.38px;font-size:12.5px;line-height:12.5px;color:#222;transform:scaleX(1.0000);">11</div>
<div class="a" style="left:0px;top:584px;width:23px;height:1px;background:#b9b9b9"></div>
<div class="t" style="left:4.88px;top:569.38px;font-size:12.5px;line-height:12.5px;color:#222;transform:scaleX(1.0000);">12</div>
<div class="a" style="left:0px;top:606px;width:23px;height:1px;background:#b9b9b9"></div>
<div class="t" style="left:4.88px;top:591.38px;font-size:12.5px;line-height:12.5px;color:#222;transform:scaleX(1.0000);">13</div>
<div class="a" style="left:0px;top:628px;width:23px;height:1px;background:#b9b9b9"></div>
<div class="t" style="left:4.75px;top:613.38px;font-size:12.5px;line-height:12.5px;color:#222;transform:scaleX(1.0000);">14</div>
<div class="a" style="left:0px;top:676px;width:23px;height:1px;background:#b9b9b9"></div>
<div class="t" style="left:4.81px;top:661.38px;font-size:12.5px;line-height:12.5px;color:#222;transform:scaleX(1.0000);">15</div>
<div class="a" style="left:0px;top:725px;width:23px;height:1px;background:#b9b9b9"></div>
<div class="t" style="left:4.88px;top:718.88px;font-size:12.5px;line-height:12.5px;color:#222;transform:scaleX(1.0000);">16</div>
<div class="a" style="left:24px;top:241px;width:1237px;height:484px;background:#fff"></div>
<div class="a" style="left:1261px;top:220px;width:19px;height:505px;background:#e6e6e6"></div>
<div class="a" style="left:24px;top:241px;width:1237px;height:131px;background:#595959"></div>
<div class="a" style="left:24px;top:676px;width:1237px;height:49px;background:#595959"></div>
<div class="a" style="left:1261px;top:241px;width:1px;height:484px;background:#c8c8c8"></div>
<div class="a" style="left:48px;top:512px;width:1142px;height:79px;background:linear-gradient(#fefefe,#e0e0e0)"></div>
<div class="t" style="left:38.33px;top:247.60px;font-size:24px;line-height:24px;color:#a6a6a6;transform:scaleX(0.8681);">Liquidador DR210.com</div>
<div class="t" style="left:38.32px;top:294.62px;font-size:27.5px;line-height:27.5px;color:#ffffff;transform:scaleX(0.8729);"><span style="font-weight:bold;">LIQUIDADOR IMPUESTO AL PATRIMONIO - AÑO 2026</span></div>
<div class="t" style="left:40.00px;top:334.62px;font-size:22.5px;line-height:22.5px;color:#ffffff;transform:scaleX(0.9361);">Aplicable a personas naturales residentes</div>
<div class="t" style="left:975.03px;top:340.60px;font-size:20px;line-height:20px;color:#ffffff;transform:scaleX(0.8648);"><span style="font-weight:bold;">Versión: 2026.1</span></div>
<svg class="a" style="left:1117px;top:250px;" width="98" height="112" viewBox="0 0 98 112"><ellipse cx="49" cy="55.6" rx="48.4" ry="55" fill="#000"/></svg>
<svg class="a" style="left:1119px;top:294px;" width="20" height="22" viewBox="0 0 20 22"><path d="M4.3 8 V19.8 H9.5 Q17 19.8 17 11.4 Q17 3.4 10 3.2" fill="none" stroke="#c9c9c9" stroke-width="3.6"/><path d="M1.5 8.5 L5.5 12.5 L14.5 2.5" fill="none" stroke="#19c9b0" stroke-width="2.6"/></svg>
<div class="t" style="left:1137.44px;top:298.73px;font-size:17.5px;line-height:17.5px;color:#cdcdcd;transform:scaleX(0.8624);"><span style="font-weight:bold;">R210</span><span style="font-weight:bold;color:#19d1b5">.</span><span style="font-weight:bold;">COM</span></div>
<div class="t" style="left:1124.55px;top:319.62px;font-size:7.5px;line-height:7.5px;color:#1fd3b8;transform:scaleX(0.8663);"><span style="font-weight:bold;">Herramientas y soluciones</span></div>
<div class="t" style="left:1148.93px;top:327.12px;font-size:7.5px;line-height:7.5px;color:#1fd3b8;transform:scaleX(0.9091);"><span style="font-weight:bold;">tributarias</span></div>
<div class="t" style="left:348.74px;top:389.75px;font-size:17px;line-height:17px;color:#375623;transform:scaleX(0.8873);"><span style="font-weight:bold;">IMPORTANTE. FAVOR LEER ANTES DE INICIAR EL USO DEL LIQUIDADOR.</span></div>
<div class="t" style="left:64.26px;top:433.05px;font-size:15px;line-height:15px;color:#333333;transform:scaleX(0.9319);-webkit-text-stroke:0.15px #333"><span style="font-weight:bold;">1.</span> Su funcionalidad contiene de</div>
<div class="t" style="left:53.31px;top:452.65px;font-size:15px;line-height:15px;color:#333333;transform:scaleX(0.9411);-webkit-text-stroke:0.15px #333">manera asertiva la aplicabilidad de</div>
<div class="t" style="left:69.66px;top:471.25px;font-size:15px;line-height:15px;color:#333333;transform:scaleX(0.8986);-webkit-text-stroke:0.15px #333">la Ley 2277 de 2022 y Decreto</div>
<div class="t" style="left:131.09px;top:491.35px;font-size:15px;line-height:15px;color:#333333;transform:scaleX(0.8687);-webkit-text-stroke:0.15px #333">1474/2025</div>
<div class="t" style="left:54.41px;top:515.95px;font-size:15px;line-height:15px;color:#333333;transform:scaleX(0.9054);-webkit-text-stroke:0.15px #333">No aplica para PN sin residencia en</div>
<div class="t" style="left:96.86px;top:535.85px;font-size:15px;line-height:15px;color:#333333;transform:scaleX(0.9043);-webkit-text-stroke:0.15px #333">el país que tengan un</div>
<div class="t" style="left:64.54px;top:554.25px;font-size:15px;line-height:15px;color:#333333;transform:scaleX(0.9319);-webkit-text-stroke:0.15px #333">establecimiento permanente en</div>
<div class="t" style="left:133.02px;top:573.35px;font-size:15px;line-height:15px;color:#333333;transform:scaleX(0.9075);-webkit-text-stroke:0.15px #333">Colombia</div>
<div class="t" style="left:288.78px;top:435.95px;font-size:15px;line-height:15px;color:#333333;transform:scaleX(0.9373);-webkit-text-stroke:0.15px #333"><span style="font-weight:bold;">2.</span> Este liquidador lo</div>
<div class="t" style="left:310.02px;top:455.55px;font-size:15px;line-height:15px;color:#333333;transform:scaleX(0.9704);-webkit-text-stroke:0.15px #333">orienta en el</div>
<div class="t" style="left:282.92px;top:474.35px;font-size:15px;line-height:15px;color:#333333;transform:scaleX(0.9626);-webkit-text-stroke:0.15px #333">diligenciamiento y no</div>
<div class="t" style="left:306.21px;top:493.55px;font-size:15px;line-height:15px;color:#333333;transform:scaleX(0.9454);-webkit-text-stroke:0.15px #333">lo exime de la</div>
<div class="t" style="left:289.80px;top:512.75px;font-size:15px;line-height:15px;color:#333333;transform:scaleX(0.9557);-webkit-text-stroke:0.15px #333">responsabilidad de</div>
<div class="t" style="left:289.32px;top:531.45px;font-size:15px;line-height:15px;color:#333333;transform:scaleX(0.9608);-webkit-text-stroke:0.15px #333">dar cumplimiento a</div>
<div class="t" style="left:297.22px;top:550.45px;font-size:15px;line-height:15px;color:#333333;transform:scaleX(0.9339);-webkit-text-stroke:0.15px #333">las disposiciones</div>
<div class="t" style="left:325.39px;top:569.15px;font-size:15px;line-height:15px;color:#333333;transform:scaleX(0.9605);-webkit-text-stroke:0.15px #333">legales.</div>
<div class="t" style="left:450.32px;top:455.55px;font-size:15px;line-height:15px;color:#333333;transform:scaleX(0.9236);-webkit-text-stroke:0.15px #333"><span style="font-weight:bold;">3.</span> Es un liquidador</div>
<div class="t" style="left:433.94px;top:474.55px;font-size:15px;line-height:15px;color:#333333;transform:scaleX(0.9392);-webkit-text-stroke:0.15px #333">elaborado en Excel que</div>
<div class="t" style="left:438.72px;top:493.55px;font-size:15px;line-height:15px;color:#333333;transform:scaleX(0.9355);-webkit-text-stroke:0.15px #333">requiere macros. Está</div>
<div class="t" style="left:432.45px;top:512.55px;font-size:15px;line-height:15px;color:#333333;transform:scaleX(0.9401);-webkit-text-stroke:0.15px #333">protegido en las casillas</div>
<div class="t" style="left:452.94px;top:532.05px;font-size:15px;line-height:15px;color:#333333;transform:scaleX(0.9383);-webkit-text-stroke:0.15px #333">que no deben ser</div>
<div class="t" style="left:463.33px;top:551.05px;font-size:15px;line-height:15px;color:#333333;transform:scaleX(0.9550);-webkit-text-stroke:0.15px #333">diligenciables.</div>
<div class="t" style="left:603.96px;top:463.75px;font-size:15px;line-height:15px;color:#333333;transform:scaleX(0.9370);-webkit-text-stroke:0.15px #333"><span style="font-weight:bold;">4.</span> Se advierte que quien viole</div>
<div class="t" style="left:605.73px;top:483.45px;font-size:15px;line-height:15px;color:#333333;transform:scaleX(0.9510);-webkit-text-stroke:0.15px #333">alguno de los parámetros de</div>
<div class="t" style="left:616.18px;top:502.05px;font-size:15px;line-height:15px;color:#333333;transform:scaleX(0.9372);-webkit-text-stroke:0.15px #333">seguridad, podría llegar a</div>
<div class="t" style="left:596.70px;top:521.25px;font-size:15px;line-height:15px;color:#333333;transform:scaleX(0.9549);-webkit-text-stroke:0.15px #333">resultados muy diferentes a los</div>
<div class="t" style="left:604.53px;top:540.15px;font-size:15px;line-height:15px;color:#333333;transform:scaleX(0.9525);-webkit-text-stroke:0.15px #333">establecidos en el liquidador.</div>
<div class="t" style="left:836.57px;top:465.45px;font-size:15px;line-height:15px;color:#333333;transform:scaleX(0.9579);-webkit-text-stroke:0.15px #333"><span style="font-weight:bold;">5.</span> Está prohibida la reproducción, transformación,</div>
<div class="t" style="left:810.92px;top:483.85px;font-size:15px;line-height:15px;color:#333333;transform:scaleX(0.9705);-webkit-text-stroke:0.15px #333">distribución total o parcial, en todo o en parte, en formato</div>
<div class="t" style="left:841.13px;top:503.15px;font-size:15px;line-height:15px;color:#333333;transform:scaleX(0.9202);-webkit-text-stroke:0.15px #333">impreso o digital del LIQUIDADOR IMPUESTO AL</div>
<div class="t" style="left:826.19px;top:522.45px;font-size:15px;line-height:15px;color:#333333;transform:scaleX(0.9275);-webkit-text-stroke:0.15px #333">PATRIMONIO, y sólo serán lícitos en la medida en que</div>
<div class="t" style="left:851.33px;top:540.25px;font-size:15px;line-height:15px;color:#333333;transform:scaleX(0.9508);-webkit-text-stroke:0.15px #333">cuente con la autorización previa de su autor.</div>
<div class="t" style="left:37.10px;top:633.50px;font-size:15px;line-height:15px;color:#ff0000;transform:scaleX(0.8577);"><span style="font-weight:bold;">Nota:</span></div>
<div class="t" style="left:71.67px;top:633.50px;font-size:15px;line-height:15px;color:#222;transform:scaleX(0.7947);"><span style="font-weight:bold;">DR210.com /DECLARANDO RENTA 210</span></div>
<div class="t" style="left:296.10px;top:633.50px;font-size:15px;line-height:15px;color:#222;transform:scaleX(0.8547);">no se hace responsable por posibles errores, interpretaciones, omisiones y desactualizaciones por cambios normativos. Cada usuario es el único</div>
<div class="t" style="left:37.10px;top:654.65px;font-size:15px;line-height:15px;color:#222;transform:scaleX(0.8590);">responsable de la verificación y utilización de la información ya que este liquidador es de medio y no de resultado.</div>
<div class="t" style="left:38.50px;top:686.65px;font-size:15px;line-height:15px;color:#f2f2f2;transform:scaleX(0.8808);"><span style="font-style:italic;">El presente LIQUIDADOR fue elaborado por</span></div>
<div class="t" style="left:307.34px;top:686.65px;font-size:15px;line-height:15px;color:#f2f2f2;transform:scaleX(0.8555);"><span style="font-weight:bold;font-style:italic;">Esteban Trejo Castaño</span></div>
<div class="t" style="left:452.51px;top:686.65px;font-size:15px;line-height:15px;color:#f2f2f2;transform:scaleX(0.9052);"><span style="font-style:italic;">y aprobado por</span></div>
<div class="t" style="left:551.85px;top:686.65px;font-size:15px;line-height:15px;color:#f2f2f2;transform:scaleX(0.8731);"><span style="font-weight:bold;font-style:italic;">Guillermo León Trejo Pérez .</span></div>
<div class="t" style="left:731.31px;top:686.65px;font-size:15px;line-height:15px;color:#f2f2f2;transform:scaleX(0.8654);"><span style="font-style:italic;">DR210 (C). Todos los derechos reservados. En caso de</span></div>
<div class="t" style="left:38.50px;top:708.25px;font-size:15px;line-height:15px;color:#f2f2f2;transform:scaleX(0.8991);"><span style="font-style:italic;">dudas o comentarios lo invitamos a contactarnos a nuestro teléfono 323 474 35 06</span></div>
<div class="a" style="left:1264px;top:222px;width:14px;height:16px;background:#fff;border:1px solid #a6a6a6"></div>
<svg class="a" style="left:1267px;top:227px;" width="8" height="5" viewBox="0 0 8 5"><path d="M0 4.5 L4 0.5 L8 4.5Z" fill="#111"/></svg>
<div class="a" style="left:1264px;top:238px;width:14px;height:400px;background:#fff;border:1px solid #a6a6a6"></div>
<div class="a" style="left:1264px;top:637px;width:14px;height:73px;background:#f0f0f0"></div>
<div class="a" style="left:1264px;top:710px;width:14px;height:15px;background:#fff;border:1px solid #a6a6a6"></div>
<svg class="a" style="left:1267px;top:716px;" width="8" height="5" viewBox="0 0 8 5"><path d="M0 0.5 H8 L4 4.5Z" fill="#111"/></svg>
<div class="a" style="left:0px;top:725px;width:1280px;height:28px;background:#e6e6e6"></div>
<svg class="a" style="left:24px;top:735px;" width="6" height="8" viewBox="0 0 6 8"><path d="M5 0.5 V7.5 L1 4Z" fill="#b0b0b0"/></svg>
<svg class="a" style="left:51px;top:735px;" width="6" height="8" viewBox="0 0 6 8"><path d="M1 0.5 V7.5 L5 4Z" fill="#1d5f37"/></svg>
<div class="a" style="left:94px;top:725px;width:56px;height:27px;background:linear-gradient(#fafafa,#ececec);border:1.5px solid #fff;border-left:1px solid #bdbdbd;border-right:1px solid #bdbdbd"></div>
<div class="a" style="left:94px;top:750px;width:56px;height:2px;background:#217346"></div>
<div class="t" style="left:104.42px;top:732.73px;font-size:13.5px;line-height:13.5px;color:#1a6a3c;transform:scaleX(0.9304);"><span style="font-weight:bold;">Inicio</span></div>
<div class="a" style="left:150px;top:727px;width:108px;height:24px;background:#c6c6c6"></div>
<div class="a" style="left:258px;top:727px;width:3px;height:24px;background:#f3f3f3;border-left:1px solid #999;border-right:1px solid #999"></div>
<div class="a" style="left:261px;top:727px;width:137px;height:24px;background:#c6c6c6"></div>
<div class="a" style="left:398px;top:727px;width:3px;height:24px;background:#f3f3f3;border-left:1px solid #999;border-right:1px solid #999"></div>
<div class="a" style="left:401px;top:727px;width:71px;height:24px;background:#c6c6c6"></div>
<div class="a" style="left:472px;top:727px;width:3px;height:24px;background:#f3f3f3;border-left:1px solid #999;border-right:1px solid #999"></div>
<div class="a" style="left:475px;top:727px;width:168px;height:24px;background:#336a98"></div>
<div class="a" style="left:643px;top:727px;width:4px;height:24px;background:#f3f3f3;border-left:1px solid #999;border-right:1px solid #999"></div>
<div class="a" style="left:648px;top:727px;width:158px;height:24px;background:#ff0000"></div>
<div class="t" style="left:161.39px;top:732.52px;font-size:13.5px;line-height:13.5px;color:#222;transform:scaleX(0.9093);">Como funciona</div>
<div class="t" style="left:272.80px;top:732.52px;font-size:13.5px;line-height:13.5px;color:#222;transform:scaleX(0.9266);">Datos contribuyente</div>
<div class="t" style="left:410.85px;top:732.52px;font-size:13.5px;line-height:13.5px;color:#222;transform:scaleX(0.9431);">Informes</div>
<div class="t" style="left:486.84px;top:732.52px;font-size:13.5px;line-height:13.5px;color:#f0f4f8;transform:scaleX(0.8847);">F420-2026 Sin emergencia</div>
<div class="a" style="left:648px;top:727px;width:158px;height:24px;overflow:hidden">
<div class="t" style="left:9.64px;top:5.53px;font-size:13.5px;line-height:13.5px;color:#ffffff;transform:scaleX(0.8855);">F420-2026 Con emergencia</div>
</div>
<div class="t" style="left:811.90px;top:732.95px;font-size:13px;line-height:13px;color:#217346;transform:scaleX(1.2088);"><span style="font-weight:bold;">...</span></div>
<svg class="a" style="left:836px;top:732px;" width="17" height="17" viewBox="0 0 17 17"><circle cx="8.5" cy="8.5" r="7.5" fill="none" stroke="#777" stroke-width="1.3"/><path d="M8.5 4.5 V12.5 M4.5 8.5 H12.5" stroke="#777" stroke-width="1.5"/></svg>
<div class="a" style="left:870px;top:735px;width:2px;height:2px;background:#a0a0a0"></div>
<div class="a" style="left:870px;top:740px;width:2px;height:2px;background:#a0a0a0"></div>
<div class="a" style="left:870px;top:745px;width:2px;height:2px;background:#a0a0a0"></div>
<div class="a" style="left:886px;top:733px;width:14px;height:16px;background:#fff;border:1px solid #a6a6a6"></div>
<svg class="a" style="left:890px;top:737px;" width="5" height="8" viewBox="0 0 5 8"><path d="M4.5 0 V8 L0.5 4Z" fill="#111"/></svg>
<div class="a" style="left:899px;top:733px;width:261px;height:16px;background:#fff;border:1px solid #a6a6a6"></div>
<div class="a" style="left:1160px;top:733px;width:87px;height:16px;background:#f0f0f0"></div>
<div class="a" style="left:1247px;top:733px;width:14px;height:16px;background:#fff;border:1px solid #a6a6a6"></div>
<svg class="a" style="left:1252px;top:737px;" width="5" height="8" viewBox="0 0 5 8"><path d="M0.5 0 V8 L4.5 4Z" fill="#111"/></svg>
</body></html>
